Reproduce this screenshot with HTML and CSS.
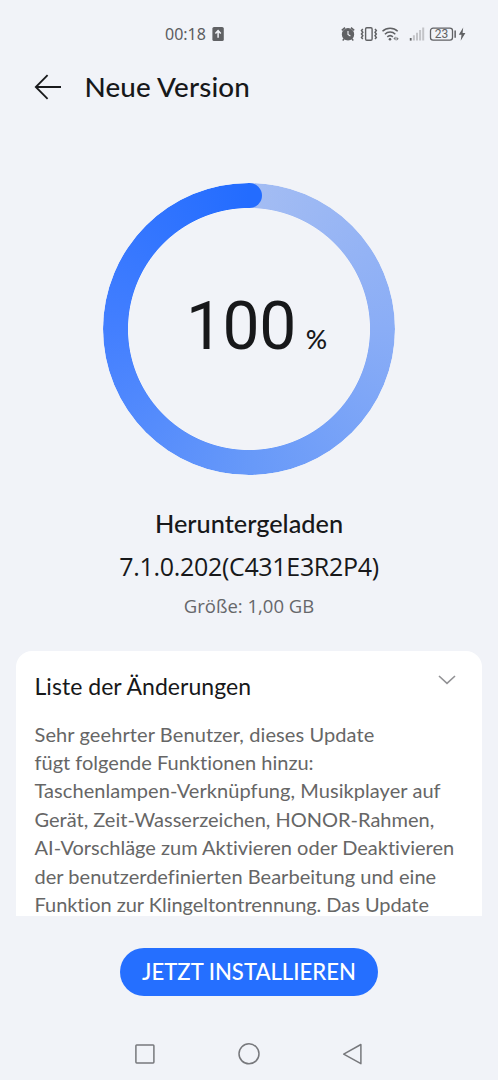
FILE: index.html
```html
<!DOCTYPE html>
<html lang="de">
<head>
<meta charset="utf-8">
<title>Neue Version</title>
<link rel="stylesheet" href="styles.css">
</head>
<body>
<div class="screen">
  <div class="status">
    <div class="status-left">
      <span class="clock">00:18</span>
      <svg width="12" height="14" viewBox="0 0 12 14"><rect x=".4" y="0" width="11.4" height="14" rx="1.6" fill="#606164"/><path d="M6.1 10.8V4M3.4 6.5 6.1 3.7l2.7 2.8" fill="none" stroke="#f1f3f8" stroke-width="1.5"/></svg>
    </div>
    <svg width="128" height="20" viewBox="0 0 128 20">
      <g stroke="#606164" fill="none" stroke-width="1.2">
        <circle cx="8" cy="10.3" r="5.6" fill="#606164"/>
        <path d="M1.8 6.4 5 3.6M14.2 6.4 11 3.6M4.2 14.8l-1.5 1.6M11.8 14.8l1.5 1.6" stroke-width="1.5"/>
        <path d="M8 7v3.5l2.4 1.5" stroke="#f1f3f8" stroke-width="1.1"/>
        <rect x="25.6" y="3.7" width="6.5" height="12.6" rx="1.2" stroke-width="1.4"/>
        <path d="M22.8 5l-1.3 1.6 1.3 1.7-1.3 1.7 1.3 1.7-1.3 1.7 1.3 1.6M35 5l1.3 1.6L35 8.3l1.3 1.7-1.3 1.7 1.3 1.7L35 15" stroke-width="1.5"/>
        <path d="M42.5 7.3a11 11 0 0 1 15.2 0M44.9 10.2a7.3 7.3 0 0 1 10.4 0M47.3 12.9a4.1 4.1 0 0 1 5.6 0" stroke-width="1.5"/>
      </g>
      <circle cx="50" cy="15.2" r="1.3" fill="#606164"/>
      <path d="M55.6 12.6v4l-2.2-2zM56.5 12.8v4l2.2-2z" fill="#77787b"/>
      <path d="M69.8 14h1.8v2.6h-1.8z" fill="#606164"/>
      <path d="M72.9 11.3h2v5.3h-2zM76 8.7h2v7.9h-2zM79.1 6h2v10.6h-2zM82.2 3.4h2v13.2h-2z" fill="#c3c4c8"/>
      <rect x="90.5" y="4.1" width="22" height="12" rx="2.6" fill="none" stroke="#606164" stroke-width="1.3"/>
      <path d="M114.4 6.4h1.5v7.4h-1.5zM123.2 3.6l-4.4 7.2h2.7l-.8 6 4.7-7.7h-2.8z" fill="#606164"/>
      <text class="battery" x="101.5" y="14.2" text-anchor="middle">23</text>
    </svg>
  </div>

  <header class="header">
    <svg width="28" height="26" viewBox="0 0 28 26"><path d="M27 13H2M13.6 1.2 1.8 13l11.8 11.8" fill="none" stroke="#191a1c" stroke-width="1.8"/></svg>
    <h1 class="title">Neue Version</h1>
  </header>

  <div class="dial">
    <div class="ring"></div>
    <div class="ring-cap"></div>
    <span class="percent">100</span><span class="unit">%</span>
  </div>

  <div class="state">Heruntergeladen</div>
  <div class="version">7.1.0.202(C431E3R2P4)</div>
  <div class="size">Größe: 1,00 GB</div>

  <section class="card">
    <div class="card-head">
      <h2 class="card-title">Liste der Änderungen</h2>
      <svg class="chevron" width="18" height="10" viewBox="0 0 18 10"><path d="M1 1l8 7.4L17 1" fill="none" stroke="#929295" stroke-width="1.6"/></svg>
    </div>
    <p class="notes">
      <span class="line l1">Sehr geehrter Benutzer, dieses Update</span>
      <span class="line">fügt folgende Funktionen hinzu:</span>
      <span class="line l3">Taschenlampen-Verknüpfung, Musikplayer auf</span>
      <span class="line">Gerät, Zeit-Wasserzeichen, HONOR-Rahmen,</span>
      <span class="line">AI-Vorschläge zum Aktivieren oder Deaktivieren</span>
      <span class="line l6">der benutzerdefinierten Bearbeitung und eine</span>
      <span class="line l7">Funktion zur Klingeltontrennung. Das Update</span>
    </p>
  </section>

  <button class="install">JETZT INSTALLIEREN</button>

  <nav class="nav">
    <svg width="22" height="22" viewBox="0 0 22 22"><rect x="1.9" y="1.9" width="18" height="18" rx=".8"/></svg>
    <svg width="22" height="22" viewBox="0 0 22 22"><circle cx="11" cy="10.8" r="10"/></svg>
    <svg width="22" height="22" viewBox="0 0 22 22"><path d="M18.9 1.5v19.2L1.7 11.1z" stroke-linejoin="round"/></svg>
  </nav>
</div>
</body>
</html>
```
FILE: styles.css
```css
* { box-sizing: border-box; }
body { margin: 0; background: #f1f3f8; }
svg { display: block; flex: none; }

.screen {
  width: 498px;
  height: 1080px;
  overflow: hidden;
  display: flex;
  flex-direction: column;
  align-items: center;
  background: #f1f3f8;
  font-family: Lato, "Noto Sans", sans-serif;
  font-variant-ligatures: none;
  color: #17181a;
}

.status {
  width: 100%;
  height: 67px;
  flex: none;
  padding: 0 30px 0 165px;
  display: flex;
  align-items: center;
  justify-content: space-between;
}
.status-left { display: flex; align-items: center; gap: 6px; }
.clock { font: 16px/20px "Noto Sans", sans-serif; color: #5c5d60; }
.battery { font: 12px Roboto, sans-serif; fill: #606164; }

.header {
  width: 100%;
  height: 40px;
  flex: none;
  padding-left: 34px;
  display: flex;
  align-items: center;
  gap: 22.5px;
}
.title { margin: 0; font-size: 27.8px; font-weight: 500; line-height: 40px; letter-spacing: .15px; }

.dial {
  position: relative;
  width: 292px;
  height: 292px;
  flex: none;
  margin-top: 76px;
  padding: 104px 0 0 83px;
  display: flex;
  align-items: baseline;
}
.ring {
  position: absolute;
  inset: 0;
  border-radius: 50%;
  background: conic-gradient(#a4bdf3, #8aadf6 90deg, #6799f9 180deg, #437fff 270deg, #236cff 360deg);
  -webkit-mask: radial-gradient(circle, transparent 120.6px, #000 121.4px);
  mask: radial-gradient(circle, transparent 120.6px, #000 121.4px);
}
.ring-cap {
  position: absolute;
  left: 146px;
  top: 0;
  width: 13px;
  height: 25px;
  border-radius: 0 13px 13px 0;
  background: #236cff;
}
.percent { font: 66px/80px Roboto, sans-serif; letter-spacing: -.5px; }
.unit { margin-left: 10px; font: 500 26.5px/30px Lato, sans-serif; }

.state { margin-top: 28px; font-size: 25.3px; font-weight: 500; line-height: 40px; }
.version { margin-top: 3px; font: 25px/40px "Open Sans", sans-serif; letter-spacing: -.32px; }
.size { margin-top: 5px; font: 18.5px/30px "Open Sans", sans-serif; color: #66676a; }

.card {
  width: 466px;
  height: 265px;
  flex: none;
  margin-top: 30px;
  padding: 15px 18px 0 18.5px;
  overflow: hidden;
  border-radius: 16px 16px 0 0;
  background: #fff;
}
.card-head { display: flex; justify-content: space-between; padding-right: 8px; }
.card-title { margin: 0; font-size: 23px; font-weight: 400; line-height: 40px; letter-spacing: .04px; }
.chevron { margin-top: 9px; }
.notes { margin: 13.5px 0 0; font-size: 20px; line-height: 28.45px; color: #666; }
.line { display: block; white-space: nowrap; }
.l1 { letter-spacing: .1px; }
.l3 { letter-spacing: .06px; }
.l6 { letter-spacing: .03px; }
.l7 { letter-spacing: -.04px; }

.install {
  width: 258px;
  height: 48px;
  flex: none;
  margin-top: 32px;
  padding: 0;
  border: 0;
  border-radius: 24px;
  background: #256fff;
  color: #fff;
  font: 500 22.1px/48px Lato, sans-serif;
}

.nav {
  width: 230px;
  margin-top: 47px;
  display: flex;
  justify-content: space-between;
}
.nav svg { fill: none; stroke: #77787c; stroke-width: 1.5; }
```
